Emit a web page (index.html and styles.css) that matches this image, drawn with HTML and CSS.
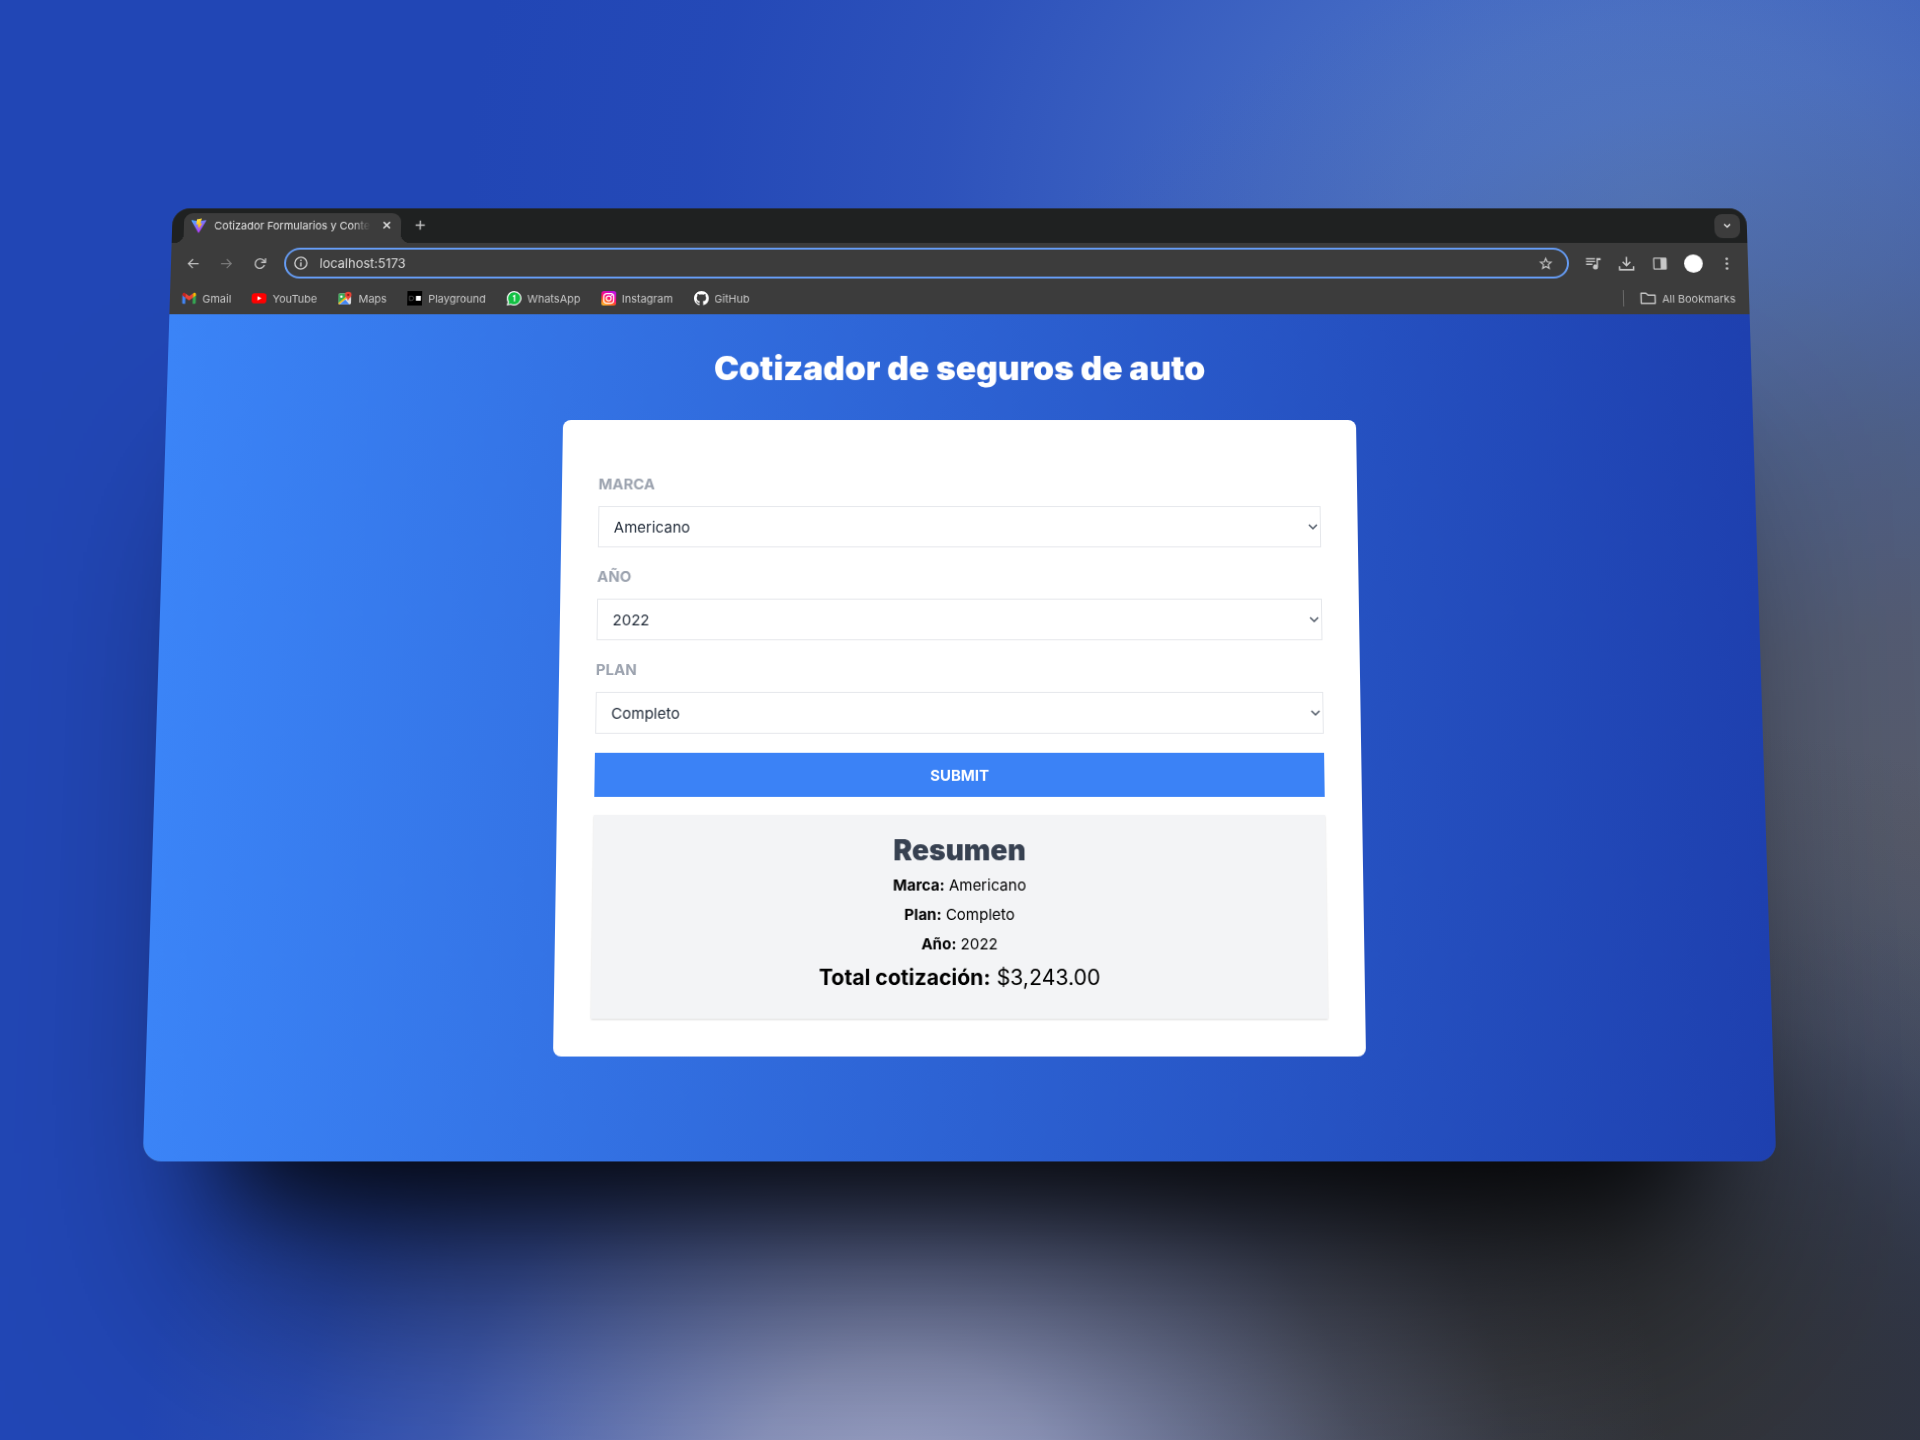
FILE: index.html
```html
<!DOCTYPE html>
<html lang="es">
<head>
<meta charset="utf-8">
<meta name="viewport" content="width=device-width, initial-scale=1">
<title>Cotizador Formularios y Context</title>
<link rel="stylesheet" href="styles.css">
</head>
<body>
<div class="stage">
  <div class="window">
    <div class="tabstrip">
      <div class="tab">
        <svg class="icon-favicon" viewBox="0 0 32 32" aria-hidden="true">
          <defs>
            <linearGradient id="vite-body" x1="0" y1="0" x2="0.6" y2="1"><stop offset="0" stop-color="#41b1ff"/><stop offset="1" stop-color="#bd34fe"/></linearGradient>
            <linearGradient id="vite-bolt" x1="0.4" y1="0" x2="0.6" y2="1"><stop offset="0" stop-color="#ffea83"/><stop offset="0.1" stop-color="#ffdd35"/><stop offset="1" stop-color="#ffa800"/></linearGradient>
          </defs>
          <path d="M31 5.8 17 30.4a1 1 0 0 1-1.6 0L1 5.8c-.4-.7.2-1.500 1-1.300l14 2.400 14-2.400c.8-.2 1.400.6 1 1.300z" fill="url(#vite-body)"/>
          <path d="m22 1-10 2-1 11 4-1-1 6 3-1-1 6 7-13-4 1z" fill="url(#vite-bolt)"/>
        </svg>
        <span class="tab-title">Cotizador Formularios y Conte</span>
        <button class="tool tab-close" type="button" aria-label="Cerrar pestaña"><svg viewBox="0 0 16 16"><path d="m4 4 8 8m0-8-8 8" fill="none" stroke="#e3e3e3" stroke-width="2"/></svg></button>
      </div>
      <button class="tool new-tab" type="button" aria-label="Nueva pestaña"><svg viewBox="0 0 16 16"><path d="M8 3v10M3 8h10" fill="none" stroke="#c7c7c7" stroke-width="1.500"/></svg></button>
      <button class="tab-search" type="button" aria-label="Buscar pestañas"><svg viewBox="0 0 16 16"><path d="m4 6 4 4 4-4" fill="none" stroke="#e3e3e3" stroke-width="2"/></svg></button>
    </div>

    <div class="toolbar">
      <button class="tool" type="button" aria-label="Atrás"><svg viewBox="0 0 24 24"><path d="M21 11H6.800l5.600-5.600L11 4l-8 8 8 8 1.400-1.400L6.800 13H21z" fill="#c7c7c7"/></svg></button>
      <button class="tool" type="button" aria-label="Adelante"><svg viewBox="0 0 24 24"><path d="M3 11h14.200l-5.600-5.600L13 4l8 8-8 8-1.400-1.400L17.200 13H3z" fill="#7c7c7c"/></svg></button>
      <button class="tool" type="button" aria-label="Recargar"><svg viewBox="0 0 24 24"><path d="M19.300 14.500A7.800 7.800 0 1 1 17.500 6.500L20 9" fill="none" stroke="#c7c7c7" stroke-width="2.200"/><path d="M20.800 3v7h-7" fill="none" stroke="#c7c7c7" stroke-width="2.200"/></svg></button>
      <div class="omnibox">
        <svg class="icon-info" viewBox="0 0 16 16" aria-hidden="true"><circle cx="8" cy="8" r="7" fill="none" stroke="#d6d6d6" stroke-width="1.500"/><path d="M8 7v5M8 4v1.600" stroke="#d6d6d6" stroke-width="1.600"/></svg>
        <input class="url" type="text" value="localhost:5173" aria-label="Dirección">
        <button class="tool star" type="button" aria-label="Añadir a marcadores"><svg viewBox="0 0 24 24"><path d="m12 3.500 2.400 5.700 6.200.5-4.700 4.100 1.400 6-5.300-3.200-5.300 3.200 1.400-6-4.700-4.100 6.200-.5z" fill="none" stroke="#c7c7c7" stroke-width="2"/></svg></button>
      </div>
      <button class="tool" type="button" aria-label="Multimedia"><svg class="icon-large" viewBox="0 0 24 24"><path d="M2 4h13v2H2zM2 8h13v2H2zM2 12h9v2H2z" fill="#c7c7c7"/><path d="M17 4h6v3h-4v10a3.600 3.600 0 1 1-2-3.300z" fill="#c7c7c7"/></svg></button>
      <button class="tool" type="button" aria-label="Descargas"><svg class="icon-large" viewBox="0 0 24 24"><path d="M12 2v13M6.500 9.500 12 15l5.500-5.500M2 16v5h20v-5" fill="none" stroke="#c7c7c7" stroke-width="2.200"/></svg></button>
      <button class="tool" type="button" aria-label="Panel lateral"><svg viewBox="0 0 24 24"><path d="M3 2h18a2 2 0 0 1 2 2v16a2 2 0 0 1-2 2H3a2 2 0 0 1-2-2V4a2 2 0 0 1 2-2zm0 2v16h10V4z" fill="#c7c7c7" fill-rule="evenodd"/></svg></button>
      <button class="tool" type="button" aria-label="Perfil"><span class="avatar"></span></button>
      <button class="tool" type="button" aria-label="Menú"><svg viewBox="0 0 24 24"><g fill="#c7c7c7"><circle cx="12" cy="4" r="2.200"/><circle cx="12" cy="12" r="2.200"/><circle cx="12" cy="20" r="2.200"/></g></svg></button>
    </div>

    <nav class="bookmarks" aria-label="Marcadores">
      <a class="bookmark" href="#"><svg viewBox="0 0 24 24" aria-hidden="true"><path d="M1 6v13a2 2 0 0 0 2 2h3V10z" fill="#4285f4"/><path d="M23 6v13a2 2 0 0 1-2 2h-3V10z" fill="#34a853"/><path d="M18 5v6l5-4V5.500C23 3 20.200 2 18.500 3.500z" fill="#fbbc04"/><path d="M1 5.500V7l5 4V5L5.500 3.500C3.800 2 1 3 1 5.500z" fill="#c5221f"/><path d="M6 4v7l6 4.500 6-4.500V4l-6 4.500z" fill="#ea4335"/></svg>Gmail</a>
      <a class="bookmark" href="#"><svg viewBox="0 0 24 24" aria-hidden="true"><rect y="3.500" width="24" height="17" rx="5" fill="#f00"/><path d="m9.500 8.500 6.500 3.500-6.500 3.500z" fill="#fff"/></svg>YouTube</a>
      <a class="bookmark" href="#"><svg viewBox="0 0 24 24" aria-hidden="true"><path d="M4 4h16a2 2 0 0 1 2 2v14a2 2 0 0 1-2 2H4a2 2 0 0 1-2-2V6a2 2 0 0 1 2-2z" fill="#f1f1f1"/><path d="M2 6a2 2 0 0 1 2-2h10l-1 7L2 20z" fill="#34a853"/><path d="M13 10 2 20a2 2 0 0 0 1 2L15 12z" fill="#fbbc04"/><path d="m13 14-9 8h16z" fill="#4285f4"/><path d="m14 13 8-1v8a2 2 0 0 1-1 1z" fill="#dadce0"/><circle cx="6.500" cy="9" r="2" fill="#fff"/><path d="M17.500 1A5.500 5.500 0 0 0 12 6.500c0 4 4.500 5 5.500 10 1-5 5.500-6 5.500-10A5.500 5.500 0 0 0 17.500 1z" fill="#ea4335"/><circle cx="17.500" cy="6.500" r="2" fill="#8e1f17"/></svg>Maps</a>
      <a class="bookmark" href="#"><svg viewBox="0 0 24 24" aria-hidden="true"><path d="M0 0h24v24H0z" fill="#000"/><path d="M3.500 8.500H7a3.500 3.500 0 0 1 0 7H3.500z" fill="none" stroke="#777"/><path d="M14 8h8v8h-8z" fill="#fff"/></svg>Playground</a>
      <a class="bookmark" href="#"><svg viewBox="0 0 24 24" aria-hidden="true"><path d="M12 0a12 12 0 1 1-5.500 22.700L0 24l1.500-6A12 12 0 0 1 12 0z" fill="#f3f3f3"/><path d="M12 2a10 10 0 1 1-5 18.700L2.800 21.500l1-4A10 10 0 0 1 12 2z" fill="#12c143"/><path d="m10 9 2.500-1.500V17" fill="none" stroke="#fff" stroke-width="2"/></svg>WhatsApp</a>
      <a class="bookmark" href="#"><svg viewBox="0 0 24 24" aria-hidden="true"><defs><linearGradient id="insta" x1="0.100" y1="1" x2="0.600" y2="0"><stop offset="0" stop-color="#ffc52e"/><stop offset="0.350" stop-color="#ff5a1f"/><stop offset="0.600" stop-color="#fd0a78"/><stop offset="1" stop-color="#c50de0"/></linearGradient></defs><rect width="24" height="24" rx="4" fill="url(#insta)"/><g fill="none" stroke="#fff" stroke-width="2"><rect x="4" y="4" width="16" height="16" rx="5"/><circle cx="12" cy="12" r="4"/></g><circle cx="16.700" cy="7.300" r="1.200" fill="#fff"/></svg>Instagram</a>
      <a class="bookmark" href="#"><svg viewBox="0 0 16 16" aria-hidden="true"><path fill="#fff" d="M8 0C3.580 0 0 3.580 0 8c0 3.540 2.290 6.530 5.470 7.590.4.070.55-.17.55-.38 0-.19-.01-.82-.01-1.490-2.010.37-2.530-.49-2.690-.94-.09-.23-.48-.94-.82-1.130-.28-.15-.68-.52-.01-.53.63-.01 1.080.58 1.230.82.72 1.210 1.870.87 2.330.66.07-.52.28-.87.51-1.070-1.780-.2-3.640-.89-3.640-3.950 0-.87.31-1.590.82-2.150-.08-.2-.36-1.020.08-2.120 0 0 .67-.21 2.200.82.64-.18 1.320-.27 2-.27s1.360.09 2 .27c1.530-1.040 2.200-.82 2.200-.82.44 1.100.16 1.920.08 2.120.51.56.82 1.270.82 2.150 0 3.070-1.870 3.750-3.650 3.950.29.25.54.73.54 1.480 0 1.070-.01 1.930-.01 2.200 0 .21.15.46.55.38A8.010 8.010 0 0 0 16 8c0-4.420-3.580-8-8-8z"/></svg>GitHub</a>
      <a class="bookmark all-bookmarks" href="#"><svg viewBox="0 0 24 24" aria-hidden="true"><path d="M2 4.500h7l3 3h10v12H2z" fill="none" stroke="#c7c7c7" stroke-width="2" stroke-linejoin="round"/></svg>All Bookmarks</a>
    </nav>

    <main class="page">
      <h1 class="page-title">Cotizador de seguros de auto</h1>
      <section class="card">
        <form class="quote-form">
          <div class="field">
            <label class="field-label" for="marca">Marca</label>
            <div class="select-box">
              <select class="select" id="marca"><option>Americano</option></select>
              <svg class="chevron" viewBox="0 0 10 10" aria-hidden="true"><path d="m1 3 4 4 4-4" fill="none" stroke="#4b5563" stroke-width="1.500"/></svg>
            </div>
          </div>
          <div class="field">
            <label class="field-label" for="anio">Año</label>
            <div class="select-box">
              <select class="select" id="anio"><option>2022</option></select>
              <svg class="chevron" viewBox="0 0 10 10" aria-hidden="true"><path d="m1 3 4 4 4-4" fill="none" stroke="#4b5563" stroke-width="1.500"/></svg>
            </div>
          </div>
          <div class="field">
            <label class="field-label" for="plan">Plan</label>
            <div class="select-box">
              <select class="select" id="plan"><option>Completo</option></select>
              <svg class="chevron" viewBox="0 0 10 10" aria-hidden="true"><path d="m1 3 4 4 4-4" fill="none" stroke="#4b5563" stroke-width="1.500"/></svg>
            </div>
          </div>
          <button class="submit" type="button">Submit</button>
        </form>
        <div class="summary">
          <h2 class="summary-title">Resumen</h2>
          <p class="summary-line"><b>Marca:</b> Americano</p>
          <p class="summary-line"><b>Plan:</b> Completo</p>
          <p class="summary-line"><b>Año:</b> 2022</p>
          <p class="summary-total"><b>Total cotización:</b> $3,243.00</p>
        </div>
      </section>
    </main>
  </div>
</div>
</body>
</html>
```
FILE: styles.css
```css
*,
*::before,
*::after {
  box-sizing: border-box;
}

body {
  margin: 0;
  font-family: Inter, "Liberation Sans", sans-serif;
}

h1,
h2,
p {
  margin: 0;
}

button,
input,
select {
  font: inherit;
  margin: 0;
}

svg {
  display: block;
}

/* Backdrop: soft glows that fall off along a bell curve */
.stage {
  display: flex;
  align-items: center;
  justify-content: center;
  min-height: 100vh;
  padding-bottom: 89px;
  overflow: hidden;
  background:
    radial-gradient(ellipse 40% 48% at 47% 104%, rgb(158 165 200), rgb(154 161 196 / 0.88) 20%, rgb(146 154 190 / 0.6) 40%, rgb(135 144 185 / 0.3) 60%, rgb(120 132 185 / 0.1) 80%, rgb(110 125 190 / 0)),
    radial-gradient(ellipse 52% 46% at 79% 95%, rgb(50 51 53), rgb(50 52 56 / 0.94) 22%, rgb(48 51 58 / 0.72) 42%, rgb(50 55 68 / 0.4) 60%, rgb(50 56 72 / 0.14) 80%, rgb(50 56 72 / 0)),
    radial-gradient(ellipse 40% 40% at 100% 104%, rgb(42 50 80), rgb(42 50 80 / 0.9) 22%, rgb(42 52 82 / 0.65) 42%, rgb(44 56 88 / 0.34) 62%, rgb(48 60 95 / 0.1) 82%, rgb(48 60 95 / 0)),
    radial-gradient(ellipse 60% 66% at 100% 58%, rgb(86 91 106), rgb(84 91 110 / 0.95) 22%, rgb(80 92 118 / 0.78) 42%, rgb(78 92 125 / 0.46) 60%, rgb(78 94 140 / 0.16) 80%, rgb(78 94 140 / 0)),
    radial-gradient(ellipse 62% 62% at 86% 14%, rgb(82 122 200), rgb(80 119 200 / 0.9) 20%, rgb(76 114 200 / 0.64) 40%, rgb(72 108 200 / 0.32) 60%, rgb(66 100 200 / 0.1) 80%, rgb(60 95 195 / 0)),
    #2146b5;
}

/* Browser window, tilted slightly backwards */
.window {
  display: flex;
  flex-direction: column;
  width: 83.5%;
  border-radius: 18px;
  overflow: hidden;
  background: #3c3c3c;
  box-shadow:
    0 120px 90px -90px rgba(0, 0, 0, 0.75),
    0 200px 200px -90px rgba(0, 0, 0, 0.7);
  transform: perspective(2677px) rotateX(6deg);
}

.tabstrip {
  display: flex;
  align-items: flex-end;
  height: 36px;
  padding: 0 7px 0 12px;
  background: #1f2121;
}

.tab {
  position: relative;
  display: flex;
  align-items: center;
  gap: 8px;
  width: 221px;
  height: 31px;
  padding: 0 7px 6px;
  border-radius: 9px 9px 0 0;
  background: #3c3c3c;
  color: #e3e3e3;
}

.tab::before,
.tab::after {
  content: "";
  position: absolute;
  bottom: 0;
  width: 9px;
  height: 9px;
}

.tab::before {
  right: 100%;
  background: radial-gradient(circle at 0 0, transparent 9px, #3c3c3c 9px);
}

.tab::after {
  left: 100%;
  background: radial-gradient(circle at 100% 0, transparent 9px, #3c3c3c 9px);
}

.icon-favicon {
  flex: none;
  width: 16px;
  height: 16px;
}

.tab-title {
  flex: 1;
  font-size: 11px;
  line-height: 16px;
  white-space: nowrap;
  mask-image: linear-gradient(to right, #000 88%, transparent);
}

.tool {
  display: flex;
  flex: none;
  align-items: center;
  justify-content: center;
  width: 34px;
  height: 32px;
  padding: 0;
  border: 0;
  background: none;
}

.tool svg {
  width: 15px;
  height: 15px;
}

.tool .icon-large {
  width: 17px;
  height: 17px;
}

.tool.tab-close {
  width: 16px;
  height: 16px;
}

.tool.tab-close svg {
  width: 13px;
  height: 13px;
}

.tool.new-tab {
  width: 38px;
  height: 31px;
  padding-bottom: 6px;
}

.tab-search {
  display: flex;
  align-items: center;
  justify-content: center;
  align-self: center;
  width: 26px;
  height: 25px;
  margin-left: auto;
  padding: 0;
  border: 0;
  border-radius: 8px;
  background: #3c3c3c;
}

.tab-search svg {
  width: 12px;
  height: 12px;
}

.toolbar {
  display: flex;
  align-items: center;
  padding: 5px 5px 4px;
}

.omnibox {
  display: flex;
  flex: 1;
  align-items: center;
  height: 32px;
  margin: 0 7px 0 8px;
  padding: 0 5px 0 8px;
  border: 2px solid #669df6;
  border-radius: 16px;
}

.icon-info {
  flex: none;
  width: 14px;
  height: 14px;
}

.url {
  flex: 1;
  min-width: 0;
  padding: 0 0 0 12px;
  border: 0;
  outline: 0;
  background: none;
  color: #dcdcdc;
  font-size: 13px;
}

.avatar {
  width: 19px;
  height: 19px;
  border-radius: 50%;
  background: #fff;
}

.bookmarks {
  display: flex;
  align-items: center;
  gap: 21px;
  height: 33px;
  padding: 0 14px 0 12px;
}

.bookmark {
  display: flex;
  align-items: center;
  gap: 6px;
  color: #c7c7c7;
  font-size: 11px;
  line-height: 16px;
  text-decoration: none;
}

.bookmark svg {
  width: 15px;
  height: 15px;
}

.all-bookmarks {
  margin-left: auto;
  padding-left: 16px;
  border-left: 1px solid #6a6a6a;
}

.all-bookmarks svg {
  width: 17px;
  height: 17px;
}

/* Quote page */
.page {
  display: flex;
  flex-direction: column;
  align-items: center;
  gap: 34px;
  padding: 37px 0 102px;
  background: linear-gradient(to right, #3b84f7, #1e40af);
}

.page-title {
  color: #fff;
  font-size: 34px;
  font-weight: 900;
  line-height: 38px;
  text-align: center;
}

.card {
  display: flex;
  flex-direction: column;
  gap: 18px;
  width: 50%;
  padding: 37px;
  border-radius: 8px;
  background: #fff;
}

.quote-form {
  display: flex;
  flex-direction: column;
  gap: 19px;
  padding-top: 18px;
}

.field {
  display: flex;
  flex-direction: column;
  gap: 11px;
}

.field-label {
  color: #9ca3af;
  font-size: 15px;
  font-weight: 700;
  line-height: 22px;
  text-transform: uppercase;
}

.select-box {
  display: grid;
  align-items: center;
}

.select {
  grid-area: 1 / 1;
  width: 100%;
  height: 42px;
  padding: 0 15px;
  border: 1px solid #e5e7eb;
  border-radius: 0;
  background: #fff;
  color: #1f2937;
  font-size: 15px;
  appearance: none;
}

.chevron {
  grid-area: 1 / 1;
  justify-self: end;
  width: 10px;
  height: 10px;
  margin-right: 3px;
  pointer-events: none;
}

.submit {
  height: 44px;
  padding: 0;
  border: 0;
  background: #3b82f6;
  color: #fff;
  font-size: 15px;
  font-weight: 700;
  text-transform: uppercase;
}

.summary {
  display: flex;
  flex-direction: column;
  gap: 7px;
  padding: 18px 18px 25px;
  background: #f3f4f6;
  box-shadow: 0 1px 2px rgba(0, 0, 0, 0.15);
  color: #000;
  text-align: center;
}

.summary-title {
  color: #374151;
  font-size: 28px;
  font-weight: 900;
  line-height: 34px;
}

.summary-line {
  font-size: 15px;
  line-height: 22px;
}

.summary-total {
  font-size: 21px;
  line-height: 30px;
}
```
